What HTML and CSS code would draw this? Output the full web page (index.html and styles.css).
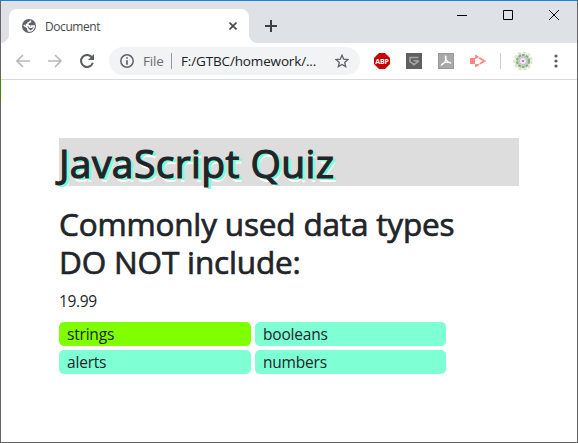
FILE: index.html
```html
<!DOCTYPE html>
<html lang="en">
<head>
<meta charset="utf-8">
<title>Document</title>
<link rel="stylesheet" href="styles.css">
</head>
<body>
<div class="window">
  <header class="tabstrip">
    <div class="tab">
      <svg class="globe" width="14" height="14" viewBox="0 0 14 14"><circle cx="7" cy="7" r="7" fill="#5f6368"/><path d="M8.500 1.500v1.300c-1.300 0-1.400 1-2.500 1.200v1.500H4.500v1.300h3.300v1.600h2V7h2.500c0 3-2.300 5.400-5.300 5.400v-1.500H5.800V9L1.700 6.200" fill="none" stroke="#fff" stroke-width="1.400"/></svg>
      <span class="tab-title">Document</span>
      <svg class="tab-close" width="8" height="8" viewBox="0 0 8 8"><path d="M.5.5l7 7M7.500.5l-7 7" stroke="#46494d" stroke-width="1.600"/></svg>
      <i class="curve curve-left"></i><i class="curve curve-right"></i>
    </div>
    <svg class="new-tab" width="12" height="12" viewBox="0 0 12 12"><path d="M6 0v12M0 6h12" stroke="#3c4043" stroke-width="2"/></svg>
    <div class="controls">
      <svg width="10" height="10" viewBox="0 0 10 10"><path d="M0 5.500h10" stroke="#000"/></svg>
      <svg width="10" height="10" viewBox="0 0 10 10"><path d="M.5.5h9v9h-9z" fill="none" stroke="#000"/></svg>
      <svg width="10" height="10" viewBox="0 0 10 10"><path d="M0 0l10 10M10 0L0 10" stroke="#000"/></svg>
    </div>
  </header>
  <nav class="toolbar">
    <svg class="back" width="14" height="14" viewBox="0 0 14 14"><path d="M14 7H1M7 1L1 7l6 6" fill="none" stroke="#bababa" stroke-width="1.700"/></svg>
    <svg class="forward" width="14" height="14" viewBox="0 0 14 14"><path d="M0 7h13M7 1l6 6-6 6" fill="none" stroke="#bababa" stroke-width="1.700"/></svg>
    <svg class="reload" width="14" height="14" viewBox="0 0 14 14"><path d="M11.600 3A6 6 0 1 0 12.800 8.800" fill="none" stroke="#5a5d61" stroke-width="2"/><path d="M14 0v6H8z" fill="#5a5d61"/></svg>
    <div class="address">
      <svg width="14" height="14" viewBox="0 0 14 14"><circle cx="7" cy="7" r="6.200" fill="none" stroke="#5f6368" stroke-width="1.500"/><path d="M7 3.300v1.500M7 6.200v4.500" stroke="#5f6368" stroke-width="1.700"/></svg>
      <span class="scheme">File</span>
      <span class="url">F:/GTBC/homework/...</span>
      <svg class="star" width="14" height="14" viewBox="0 0 14 14"><path d="M7 1.200l1.700 4 4.300.4-3.300 2.800 1 4.200L7 10.400l-3.700 2.200 1-4.200L1 5.600l4.300-.4z" fill="none" stroke="#5f6368" stroke-width="1.300"/></svg>
    </div>
    <div class="extensions">
      <svg width="16" height="16" viewBox="0 0 16 16"><path d="M5 0h6l5 5v6l-5 5H5l-5-5V5z" fill="#c80000"/><text class="abp" x="8" y="10.700" text-anchor="middle">ABP</text></svg>
      <svg width="16" height="16" viewBox="0 0 16 16"><path d="M0 0h16v16H0z" fill="#606060"/><path d="M12.500 4.500H4v4.200l4 3 4-3V7.700H7.500" fill="none" stroke="#a4a4a4" stroke-width="1.600"/></svg>
      <svg width="16" height="16" viewBox="0 0 16 16"><path d="M0 0h16v16H0z" fill="#999"/><path d="M1 1h14v14H1z" fill="#a9a9a9"/><path d="M3 12.500c1.500-3 7-4.500 10-2.500M7.400 2.500c-.8 3 1.500 6.500 5.600 7.800M7.800 3c1.500 3-1.800 8-4.800 9.500" fill="none" stroke="#fff" stroke-width="1.200"/></svg>
      <svg width="16" height="16" viewBox="0 0 16 16"><path d="M0 5h5v6H0z" fill="#ff8585"/><path d="M6 5.800V3l8.500 5L6 13v-2.800" fill="none" stroke="#ff8585" stroke-width="1.800" stroke-dasharray="5.500 .8"/></svg>
    </div>
    <i class="divider"></i>
    <svg class="avatar" width="20" height="20" viewBox="0 0 20 20"><circle cx="10" cy="10" r="8.600" fill="#e7f1df" stroke="#d5e9ca" stroke-width="2" stroke-dasharray="3 2"/><circle cx="10" cy="10" r="6" fill="#c6d7bd" stroke="#91aa88" stroke-width="2.200" stroke-dasharray="2.800 1"/><circle cx="10" cy="10" r="3.600" fill="#eee5f4" stroke="#baa9c7" stroke-dasharray="1.500 1"/><circle cx="10" cy="10" r="1" fill="#8d6caa"/></svg>
    <svg class="menu" width="4" height="14" viewBox="0 0 4 14"><g fill="#5a5d61"><circle cx="2" cy="2" r="1.600"/><circle cx="2" cy="7" r="1.600"/><circle cx="2" cy="12" r="1.600"/></g></svg>
  </nav>
  <main class="page">
    <h1>JavaScript Quiz</h1>
    <h2>Commonly used data types<br>DO NOT include:</h2>
    <p class="timer">19.99</p>
    <div class="choices">
      <div class="choice selected">strings</div>
      <div class="choice">booleans</div>
      <div class="choice">alerts</div>
      <div class="choice">numbers</div>
    </div>
  </main>
  <i class="edge"></i>
</div>
</body>
</html>
```
FILE: styles.css
```css
* { box-sizing: border-box; }
body { margin: 0; background: #fff; font-family: "Open Sans", "Noto Sans", sans-serif; color: #212529; }
svg { display: block; flex: none; }
.window { position: relative; width: 578px; height: 443px; border: 1px solid #666; border-top-color: #1883d7; }
.edge { position: absolute; left: -1px; top: 76px; width: 1px; height: 24px; background: #468011; }
.tabstrip { height: 42px; background: #dee1e6; display: flex; padding: 8px 0 0 8px; }
.tab { position: relative; width: 240px; height: 34px; background: #fff; border-radius: 8px 8px 0 0; display: flex; align-items: center; padding: 0 12px 0 13px; }
.tab-title { font-size: 12px; color: #45494d; margin-left: 9px; letter-spacing: -0.42px; white-space: nowrap; }
.tab-close { margin-left: auto; }
.curve { position: absolute; bottom: 0; width: 8px; height: 8px; }
.curve-left { left: -8px; background: radial-gradient(circle at 0 0, transparent 7.5px, #fff 8px); }
.curve-right { right: -8px; background: radial-gradient(circle at 100% 0, transparent 7.5px, #fff 8px); }
.new-tab { margin: 11px 0 0 16px; }
.controls { margin-left: auto; display: flex; gap: 36px; padding: 1px 18px 0 0; }
.toolbar { height: 37px; background: #fff; border-bottom: 1px solid #d9dadd; display: flex; align-items: center; padding-left: 15px; }
.forward { margin-left: 18px; }
.reload { margin-left: 18px; }
.address { margin-left: 15px; width: 251px; height: 28px; border-radius: 14px; background: #f1f3f4; display: flex; align-items: center; padding: 0 11px; }
.scheme { margin-left: 9px; width: 29px; border-right: 1px solid #94979a; height: 16px; line-height: 16px; font-size: 13.5px; letter-spacing: -0.2px; color: #6a6d71; }
.url { margin-left: 9px; font-size: 13.5px; line-height: 16px; color: #202124; white-space: nowrap; letter-spacing: -0.15px; }
.star { margin-left: auto; }
.extensions { display: flex; gap: 16px; margin-left: 14px; }
.abp { font: bold 7px "Open Sans", sans-serif; fill: #fff; letter-spacing: -0.1px; }
.divider { width: 1px; height: 16px; background: #ccc; margin-left: 14px; }
.avatar { margin-left: 12px; }
.menu { margin-left: 21px; }
.page { padding: 58px 58px 0; }
h1, h2, p { margin: 0; }
h1 { height: 48px; background: #ddd; font-size: 39px; line-height: 50px; font-weight: 400; -webkit-text-stroke: 1.2px #212529; letter-spacing: 0.4px; white-space: nowrap; text-shadow: 2px 1px aquamarine, 3px 2px aquamarine, 3px 4px #fff; }
h2 { margin-top: 19px; font-size: 31.5px; line-height: 38px; font-weight: 400; -webkit-text-stroke: 0.7px #212529; letter-spacing: -0.17px; white-space: nowrap; }
.timer { margin-top: 8px; font-size: 15.5px; line-height: 24px; letter-spacing: -0.35px; }
.choices { display: grid; grid-template-columns: 192px 191px; gap: 4px; margin-top: 9px; }
.choice { height: 24px; border-radius: 5px; background: aquamarine; padding-left: 8px; font-size: 15.5px; line-height: 24px; letter-spacing: -0.2px; }
.selected { background: chartreuse; }
```
